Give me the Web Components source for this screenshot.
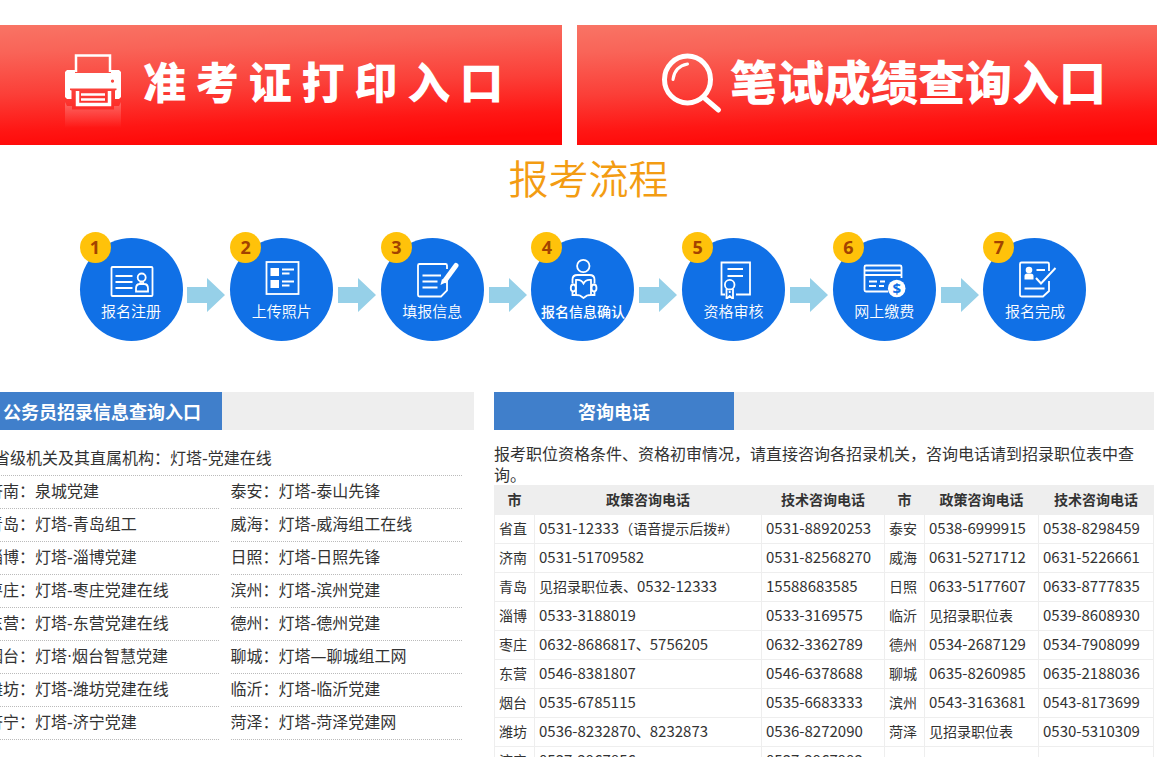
<!DOCTYPE html>
<html lang="zh-CN">
<head>
<meta charset="utf-8">
<title>公务员招录报名</title>
<style>
html { overflow-x: hidden; }
body { margin: 0; background: #fff; color: #333; font: 16px/21px "Noto Sans CJK SC", "Noto Sans", sans-serif; overflow-x: hidden; }
</style>
</head>
<body>
<exam-page></exam-page>

<script>
class ExamPage extends HTMLElement {
  connectedCallback() {
    this.attachShadow({ mode: 'open' }).innerHTML = `
<style>
:host { display: block; padding-top: 25px; }
.banners { display: grid; grid-template-columns: 1fr 1fr; gap: 15px; margin-left: -18px; padding-right: 3px; }
.flow { padding: 12px 0 0 17px; }
h2 { margin: 0 0 41px; font-size: 40px; line-height: 40px; font-weight: 350; color: #f39c12; text-align: center; }
.lower { display: grid; grid-template-columns: 492fr 660fr; gap: 20px; margin: 51px 0 0 -18px; padding-right: 6px; align-items: start; }
p { margin: 0; }
</style>
<nav class="banners">
  <entry-banner>
    <svg slot="icon" width="56" height="76" viewBox="0 0 56 76" fill="none">
      <defs>
        <linearGradient id="fade" x1="0" y1="0" x2="0" y2="1"><stop offset="0" stop-color="#fff" stop-opacity=".26"/><stop offset="1" stop-color="#fff" stop-opacity="0"/></linearGradient>
      </defs>
      <path d="M11 18V1.500h34V18" stroke="#fff" stroke-width="2.500"/>
      <path fill="#fff" fill-rule="evenodd" d="M2 16h8v3h36v-3h8l2 2v25l-2 2h-4v-8.500l1.500-.5v-1.500H5V36l1.500.5V45H2l-2-2V18zM47.500 25.500a1.600 1.600 0 1 0 .01 0z"/>
      <path d="M12.500 37v13.500h32V37" stroke="#fff" stroke-width="3.500"/>
      <path d="M16 40.500h24M16 45.500h24" stroke="#fff" stroke-width="2.500"/>
      <path d="M0 48l2 4h5v3.500h42V52h5l2-4v26H0z" fill="url(#fade)"/>
    </svg>准 考 证 打 印 入 口</entry-banner>
  <entry-banner size="large">
    <svg slot="icon" width="60" height="60" viewBox="0 0 60 60" fill="none" stroke="#fff" stroke-linecap="round">
      <ellipse cx="25.500" cy="25.500" rx="23" ry="23.500" stroke-width="5"/>
      <path d="M43 44.500l13.500 11.500" stroke-width="5"/>
      <path d="M11 25.500q1.500-13 14.500-15.500" stroke-width="3"/>
    </svg>笔试成绩查询入口</entry-banner>
</nav>
<section class="flow">
  <h2>报考流程</h2>
  <step-flow></step-flow>
</section>
<div class="lower">
  <tab-panel><span slot="tab">公务员招录信息查询入口</span><link-list></link-list></tab-panel>
  <tab-panel><span slot="tab">咨询电话</span>
    <p>报考职位资格条件、资格初审情况，请直接咨询各招录机关，咨询电话请到招录职位表中查询。</p>
    <phone-table></phone-table>
  </tab-panel>
</div>`;
  }
}

class EntryBanner extends HTMLElement {
  connectedCallback() {
    this.attachShadow({ mode: 'open' }).innerHTML = `
<style>
:host { display: block; }
a { display: flex; gap: 22px; height: 120px; padding: 0 0 2px 83px; box-sizing: border-box; color: #fff; text-decoration: none; white-space: nowrap;
  font-size: 43px; line-height: 48px; font-weight: 900; align-items: center;
  background: linear-gradient(178deg, #f97465 0%, #f96458 20%, #fb3f38 50%, #ff1614 76%, #ff0606 92%); }
:host([size=large]) a { gap: 8px; padding-left: 85px; font-size: 47px; }
.icon { display: flex; height: 60px; }
.text { padding-bottom: 8px; }
::slotted(svg) { overflow: visible; }
</style>
<a href="#"><span class="icon"><slot name="icon"></slot></span><span class="text"><slot></slot></span></a>`;
  }
}

const ICONS = [
  `<rect x="31.500" y="29" width="41" height="29" rx="1"/><path d="M35.500 38h17M35.500 44h17M35.500 50h17"/><circle cx="61.700" cy="39.500" r="4"/><path d="M56 53.500v-3q0-4.500 4-4.500h4q4 0 4 4.500v3zM59.500 44.500q2.200 1.500 4.500 0"/>`,
  `<rect x="36.500" y="24" width="32" height="32"/><g fill="#fff" stroke="none"><path d="M40.500 30H49v8h-8.500zM40.500 42H49v8h-8.500z"/></g><path d="M52 31.500h12M52 35.500h7.500M52 43.500h12M52 47.500h7.500"/>`,
  `<path d="M66 31v-3.500q0-1.500-1.500-1.500H38.500Q37 26 37 27.500V57q0 1.500 1.500 1.500H60l6-6V42M41.500 37.500H60M41.500 43.500h15M41.500 49.500h15"/><path d="M75 27.500L64 42.500" stroke-width="5" stroke-linecap="round"/><path d="M59.500 47l1.500-6 4.500 3z" fill="#fff" stroke="none"/>`,
  `<circle cx="52.300" cy="28" r="6.200"/><path d="M41.500 45.500v-4q0-4.500 5-4.500h12q5 0 5 4.500v4M41.500 54v3h3M63.500 54v3h-3"/><path d="M45 42q5-1 7.500 3.500Q55 41 60 42v15q-2.500 0-4 .5L52.500 60 49 57.500q-1.500-.5-4-.5z"/><ellipse cx="42.300" cy="50" rx="2.500" ry="3.500"/><ellipse cx="63" cy="50" rx="2.500" ry="3.500"/>`,
  `<path d="M43 56.500h-3.500v-32H68v32H54M45.500 31H61M45.500 38H61"/><circle cx="47.700" cy="46.700" r="4.800"/><path d="M44.500 51v10l3.200-3 3.300 3V51M47.700 53v2"/>`,
  `<path d="M55 53.500H33q-1.500 0-1.500-1.500V29q0-1.500 1.500-1.500h34q1.500 0 1.500 1.500v11M31.500 32.500h37M31.500 37h37M36 43.500h8M47 43.500h5M36 48h7M46 48h5"/><circle cx="63.700" cy="50.500" r="8.800" fill="#fff" stroke="none"/><text x="63.700" y="56" text-anchor="middle" font-family="Open Sans" font-size="15" font-weight="700" fill="#1070e6" stroke="none">$</text>`,
  `<path d="M66 33v-7q0-1.500-1.500-1.500h-26Q37 24.500 37 26v31q0 1.500 1.500 1.500H60l6-5.500V43M53.500 32H62M41.500 50.500h20"/><g fill="#fff" stroke="none"><circle cx="46" cy="32" r="3.300"/><path d="M41.500 41.500V38q0-2.500 3-2.500h3q3 0 3 2.500v3.500z"/></g><path d="M53 40l5 5.500 14.500-15.500" stroke-width="2"/>`
];
const STEPS = ['报名注册', '上传照片', '填报信息', '报名信息确认', '资格审核', '网上缴费', '报名完成'];

class FlowStep extends HTMLElement {
  connectedCallback() {
    const n = Number(this.getAttribute('number'));
    this.attachShadow({ mode: 'open' }).innerHTML = `
<style>
:host { display: block; position: relative; width: 103px; height: 103px; border-radius: 50%; background: #1070e6; color: #fff; text-align: center; flex: none; }
svg { display: block; }
.label { display: block; font-size: 15px; line-height: 24px; font-weight: 350; white-space: nowrap; }
:host([dense]) .label { font-size: 14px; font-weight: 500; }
.badge { position: absolute; left: 0; top: -6px; width: 31px; height: 31px; border-radius: 50%; background: #ffc20a; color: #a34300; font: 700 18px/30px "Open Sans", sans-serif; }
</style>
<span class="badge">${n}</span>
<svg width="103" height="61" viewBox="0 0 103 61" fill="none" stroke="#fff" stroke-width="1.800" aria-hidden="true">${ICONS[n - 1]}</svg>
<span class="label"><slot></slot></span>`;
  }
}

class StepFlow extends HTMLElement {
  connectedCallback() {
    const arrow = '<li class="arrow" aria-hidden="true"><svg width="38" height="34" viewBox="0 0 38 34"><path d="M0 9h20V0l18 17-18 17V25H0z" fill="#96d0e8"/></svg></li>';
    this.attachShadow({ mode: 'open' }).innerHTML = `
<style>
:host { display: block; padding-right: 11px; }
ol { display: flex; justify-content: space-between; align-items: center; max-width: 1007px; margin: 0 auto; padding: 0; list-style: none; }
.arrow { padding-top: 11px; }
svg { display: block; }
</style>
<ol>${STEPS.map((s, i) => `<li><flow-step number="${i + 1}"${s.length > 4 ? ' dense' : ''}>${s}</flow-step></li>`).join(arrow)}</ol>`;
  }
}

class TabPanel extends HTMLElement {
  connectedCallback() {
    this.attachShadow({ mode: 'open' }).innerHTML = `
<style>
:host { display: block; min-width: 0; }
header { background: #eee; margin-bottom: 13px; }
h3 { margin: 0; width: 240px; background: #407fcb; color: #fff; font-size: 18px; line-height: 38px; font-weight: 700; text-align: center; }
</style>
<header><h3><slot name="tab"></slot></h3></header>
<slot></slot>`;
  }
}

const LINKS = [
  ['济南', '泉城党建'], ['泰安', '灯塔-泰山先锋'],
  ['青岛', '灯塔-青岛组工'], ['威海', '灯塔-威海组工在线'],
  ['淄博', '灯塔-淄博党建'], ['日照', '灯塔-日照先锋'],
  ['枣庄', '灯塔-枣庄党建在线'], ['滨州', '灯塔-滨州党建'],
  ['东营', '灯塔-东营党建在线'], ['德州', '灯塔-德州党建'],
  ['烟台', '灯塔·烟台智慧党建'], ['聊城', '灯塔—聊城组工网'],
  ['潍坊', '灯塔-潍坊党建在线'], ['临沂', '灯塔-临沂党建'],
  ['济宁', '灯塔-济宁党建'], ['菏泽', '灯塔-菏泽党建网']
];

class LinkList extends HTMLElement {
  connectedCallback() {
    const row = ([city, name]) => `${city}：<a href="#">${name}</a>`;
    this.attachShadow({ mode: 'open' }).innerHTML = `
<style>
:host { display: block; font-family: "DejaVu Sans", "Noto Sans CJK SC", sans-serif; }
ul { display: grid; grid-template-columns: 1fr 1fr; column-gap: 12px; margin: 0 12px 0 5px; padding: 0; list-style: none; }
li { line-height: 32px; border-bottom: 1px dotted #bbb; white-space: nowrap; }
.wide { grid-column: 1 / -1; padding-left: 7px; }
a { color: inherit; text-decoration: none; }
</style>
<ul><li class="wide">${row(['省级机关及其直属机构', '灯塔-党建在线'])}</li>${LINKS.map(l => `<li>${row(l)}</li>`).join('')}</ul>`;
  }
}

const PHONES = [
  ['省直', '0531-12333（语音提示后拨#）', '0531-88920253', '泰安', '0538-6999915', '0538-8298459'],
  ['济南', '0531-51709582', '0531-82568270', '威海', '0631-5271712', '0631-5226661'],
  ['青岛', '见招录职位表、0532-12333', '15588683585', '日照', '0633-5177607', '0633-8777835'],
  ['淄博', '0533-3188019', '0533-3169575', '临沂', '见招录职位表', '0539-8608930'],
  ['枣庄', '0632-8686817、5756205', '0632-3362789', '德州', '0534-2687129', '0534-7908099'],
  ['东营', '0546-8381807', '0546-6378688', '聊城', '0635-8260985', '0635-2188036'],
  ['烟台', '0535-6785115', '0535-6683333', '滨州', '0543-3163681', '0543-8173699'],
  ['潍坊', '0536-8232870、8232873', '0536-8272090', '菏泽', '见招录职位表', '0530-5310309'],
  ['济宁', '0537-2967856', '0537-2967993', '', '', '']
];

class PhoneTable extends HTMLElement {
  connectedCallback() {
    const heads = ['市', '政策咨询电话', '技术咨询电话'];
    const cell = t => `<td>${t.replace(/[\d-]+/g, '<span>$&</span>')}</td>`;
    this.attachShadow({ mode: 'open' }).innerHTML = `
<style>
:host { display: block; }
table { width: 100%; table-layout: fixed; border-collapse: collapse; font-size: 14px; line-height: 20px; }
tr { height: 29px; }
th, td { padding: 0 4px 2px; border: 1px solid #eee; white-space: nowrap; }
th { background: #eee; font-weight: 700; }
td { text-align: left; }
span { font-size: 15px; }
.city { width: 40px; } .tech { width: 123px; } .policy2 { width: 114px; } .tech2 { width: 115px; }
</style>
<table>
<colgroup><col class="city"><col><col class="tech"><col class="city"><col class="policy2"><col class="tech2"></colgroup>
<thead><tr>${[...heads, ...heads].map(h => `<th scope="col">${h}</th>`).join('')}</tr></thead>
<tbody>${PHONES.map(r => `<tr>${r.map(cell).join('')}</tr>`).join('')}</tbody>
</table>`;
  }
}

customElements.define('entry-banner', EntryBanner);
customElements.define('flow-step', FlowStep);
customElements.define('step-flow', StepFlow);
customElements.define('tab-panel', TabPanel);
customElements.define('link-list', LinkList);
customElements.define('phone-table', PhoneTable);
customElements.define('exam-page', ExamPage);
</script>
</body>
</html>
